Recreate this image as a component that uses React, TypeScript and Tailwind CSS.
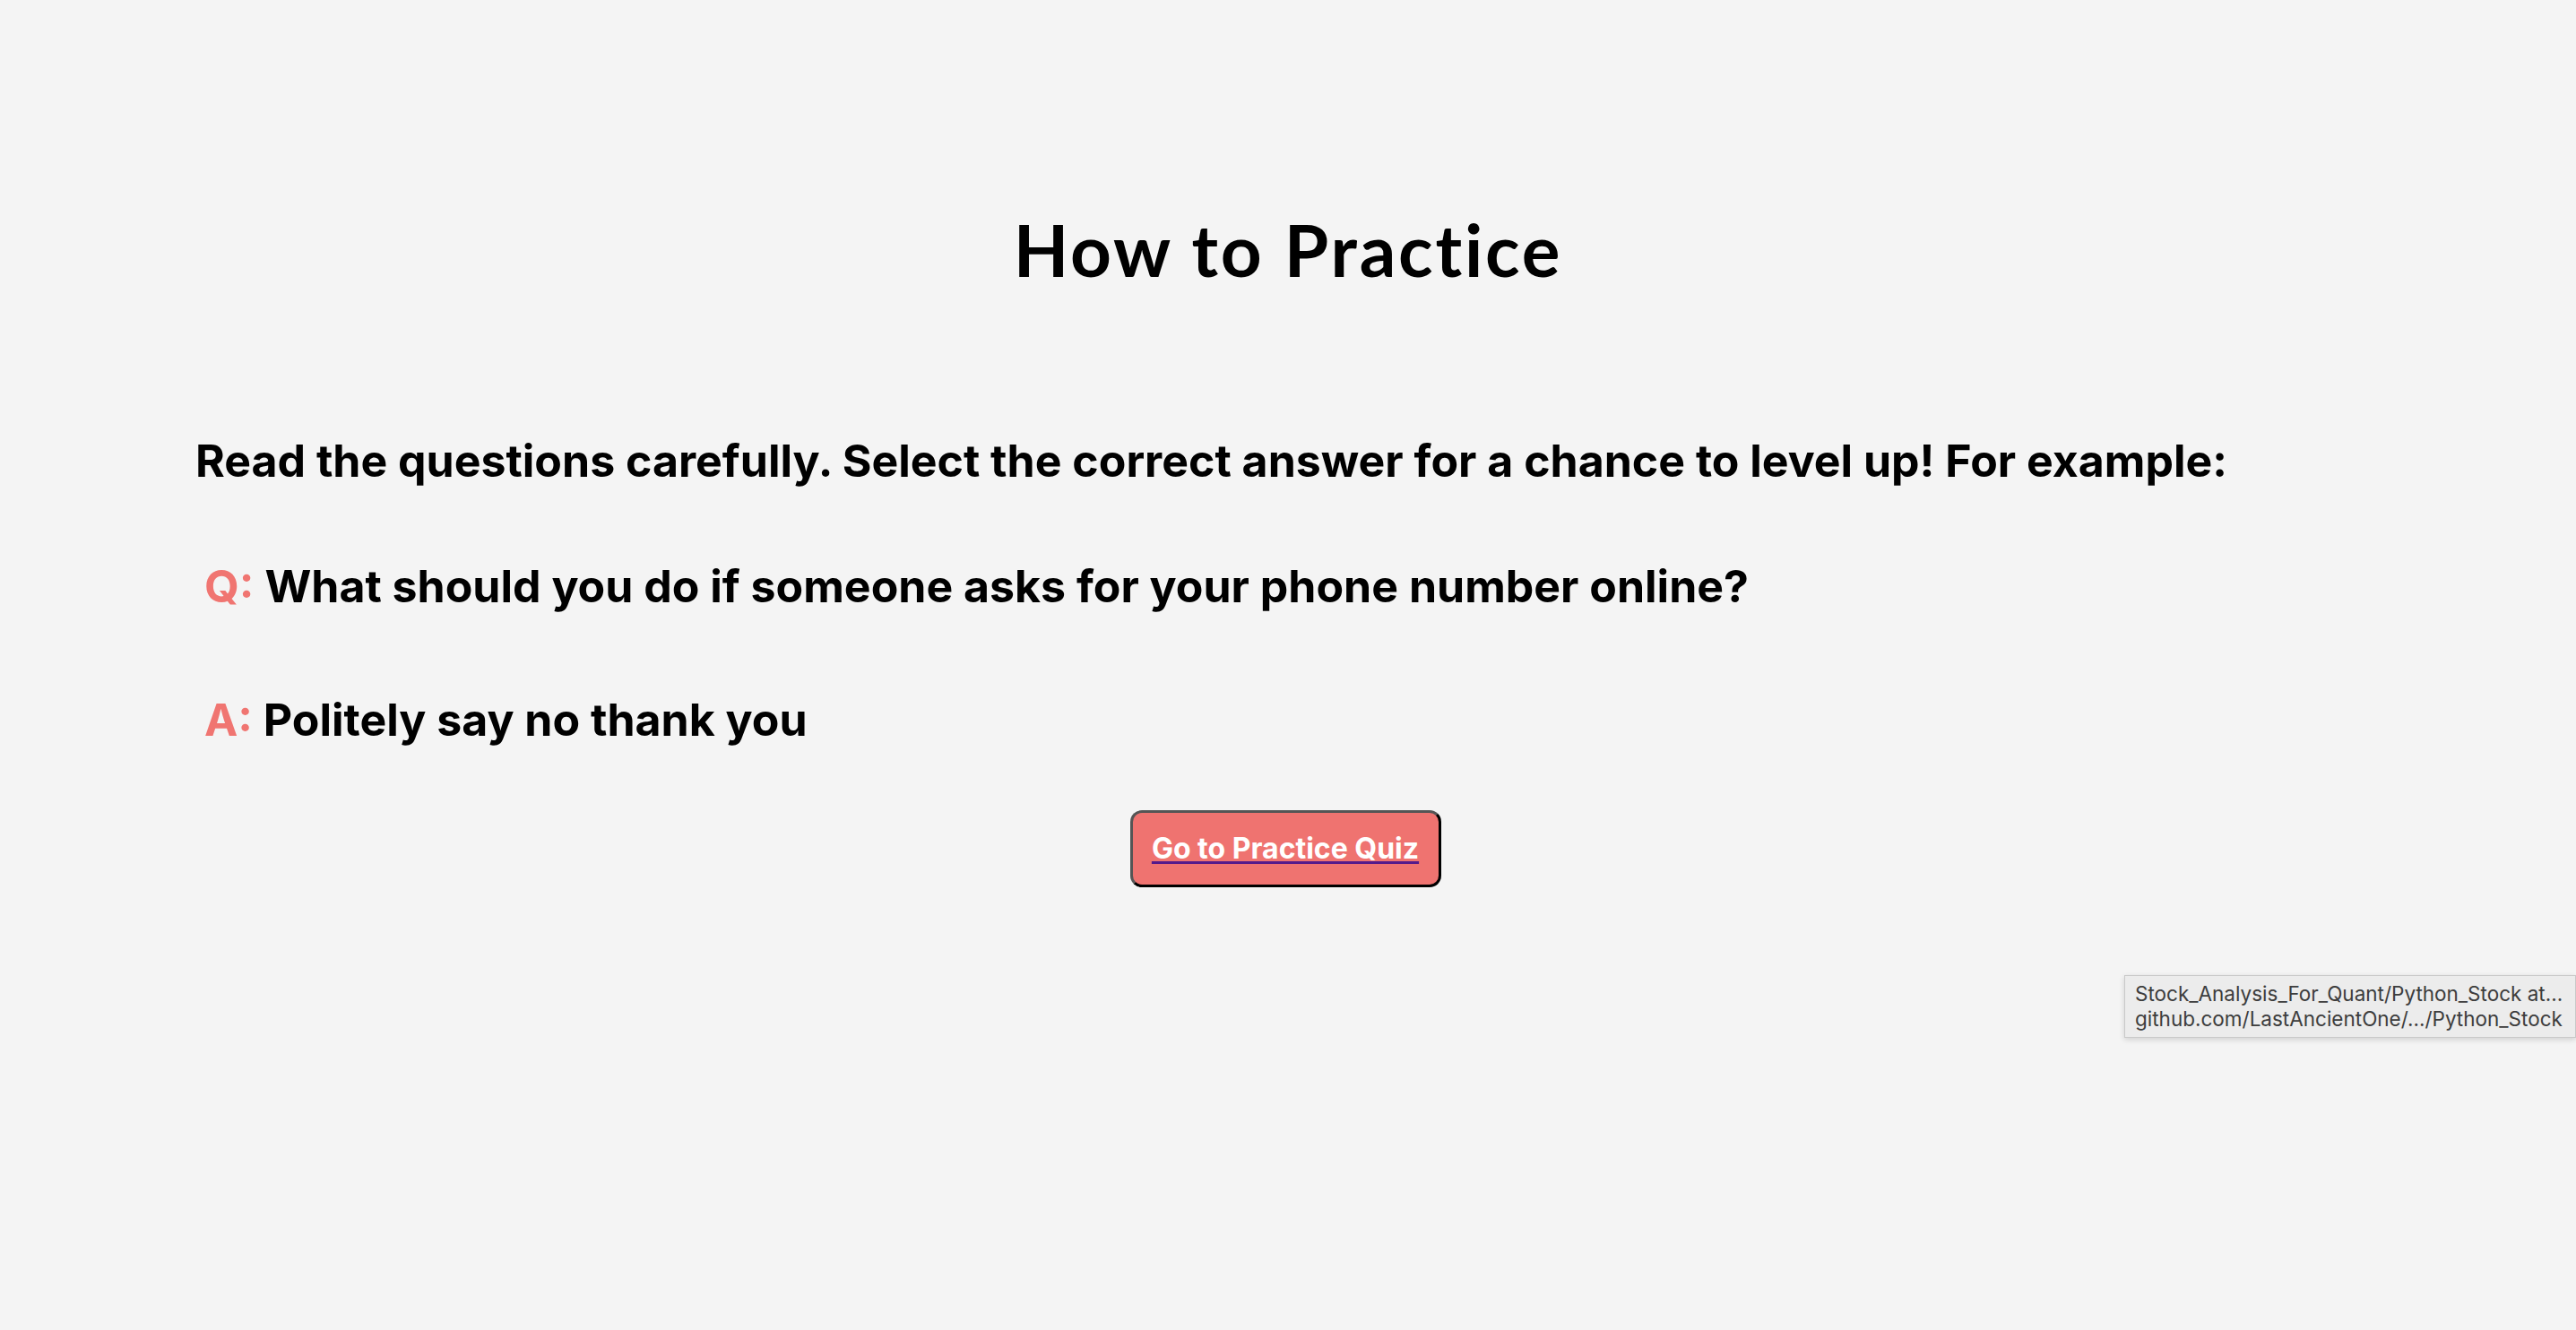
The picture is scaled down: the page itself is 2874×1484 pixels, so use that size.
export default function App() {
  return (
    <div className="relative min-h-screen w-full overflow-hidden bg-[#f4f4f4] text-black">
      <div className="flex flex-col pt-[238px] px-[218px]">
        {/* Title */}
        <h1 className="text-center font-['Lato',sans-serif] text-[80px] font-bold leading-none tracking-[2.8px]">How to Practice</h1>

        {/* Instructions */}
        <p className="mt-[171px] font-['Inter',sans-serif] text-[50px] font-bold leading-none">
          Read the questions carefully. Select the correct answer for a chance to level up! For example:
        </p>

        {/* Example question */}
        <p className="mt-[90px] ml-[10px] font-['Inter',sans-serif] text-[50px] font-bold leading-none">
          <span className="text-[#f07571]">Q:</span> What should you do if someone asks for your phone number online?
        </p>

        <p className="mt-[99px] ml-[10px] font-['Inter',sans-serif] text-[50px] font-bold leading-none">
          <span className="text-[#f07571]">A:</span> Politely say no thank you
        </p>

        {/* Button */}
        <div className="mt-[76px] flex justify-center">
          <a
            href="#"
            className="mr-[6px] flex h-[86px] w-[347px] items-center justify-center rounded-[13px] border-[3px] border-t-[#555] border-l-[#555] border-r-black border-b-black bg-[#ef7370] font-['Inter',sans-serif] text-[32px] font-bold leading-none text-white underline decoration-[#551a8b] decoration-[3px] underline-offset-[3px]"
          >
            Go to Practice Quiz
          </a>
        </div>
      </div>

      {/* Browser status tooltip */}
      <div className="absolute left-[2370px] top-[1088px] w-[504px] border border-[#c9c9c9] bg-[#ececec] px-[11px] py-[6px] font-['Inter',sans-serif] text-[22.5px] leading-[28px] text-[#3d3d3d] shadow-[0_2px_6px_rgba(0,0,0,0.15)]">
        <div className="whitespace-nowrap">Stock_Analysis_For_Quant/Python_Stock at...</div>
        <div className="whitespace-nowrap">github.com/LastAncientOne/.../Python_Stock</div>
      </div>
    </div>
  );
}
